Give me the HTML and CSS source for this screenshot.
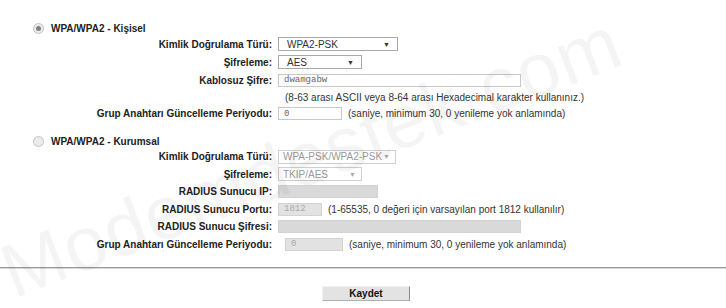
FILE: index.html
```html
<!DOCTYPE html>
<html lang="tr">
<head>
    <meta charset="UTF-8">
    <meta name="viewport" content="width=device-width, initial-scale=1.0">
    <title>Kablosuz Güvenlik</title>
    <link rel="stylesheet" href="styles.css">
</head>
<body>
    <!-- WPA/WPA2 Personal -->
    <div class="section personal">
        <div class="radio-row">
            <span class="radio checked"></span>
            <span class="radio-label">WPA/WPA2 - Kişisel</span>
        </div>
        <div class="row">
            <label class="label">Kimlik Doğrulama Türü:</label>
            <div class="select select-wide"><span>WPA2-PSK</span><span class="arrow">&#9660;</span></div>
        </div>
        <div class="row">
            <label class="label">Şifreleme:</label>
            <div class="select select-short"><span>AES</span><span class="arrow">&#9660;</span></div>
        </div>
        <div class="row">
            <label class="label">Kablosuz Şifre:</label>
            <input type="text" class="field field-long" value="dwamgabw">
        </div>
        <div class="row hint-row">
            <span class="label"></span>
            <span class="hint">(8-63 arası ASCII veya 8-64 arası Hexadecimal karakter kullanınız.)</span>
        </div>
        <div class="row group-row">
            <label class="label">Grup Anahtarı Güncelleme Periyodu:</label>
            <input type="text" class="field field-period" value="0">
            <span class="note">(saniye, minimum 30, 0 yenileme yok anlamında)</span>
        </div>
    </div>

    <!-- WPA/WPA2 Enterprise -->
    <div class="section enterprise">
        <div class="radio-row">
            <span class="radio"></span>
            <span class="radio-label">WPA/WPA2 - Kurumsal</span>
        </div>
        <div class="row">
            <label class="label">Kimlik Doğrulama Türü:</label>
            <div class="select select-wide disabled"><span>WPA-PSK/WPA2-PSK</span><span class="arrow">&#9660;</span></div>
        </div>
        <div class="row">
            <label class="label">Şifreleme:</label>
            <div class="select select-short disabled"><span>TKIP/AES</span><span class="arrow">&#9660;</span></div>
        </div>
        <div class="row">
            <label class="label">RADIUS Sunucu IP:</label>
            <input type="text" class="field field-ip" disabled>
        </div>
        <div class="row">
            <label class="label">RADIUS Sunucu Portu:</label>
            <input type="text" class="field field-port" value="1812" disabled>
            <span class="note">(1-65535, 0 değeri için varsayılan port 1812 kullanılır)</span>
        </div>
        <div class="row">
            <label class="label">RADIUS Sunucu Şifresi:</label>
            <input type="text" class="field field-long" disabled>
        </div>
        <div class="row">
            <label class="label">Grup Anahtarı Güncelleme Periyodu:</label>
            <input type="text" class="field field-period shifted" value="0" disabled>
            <span class="note">(saniye, minimum 30, 0 yenileme yok anlamında)</span>
        </div>
    </div>

    <hr class="divider">

    <div class="actions">
        <button class="save-btn">Kaydet</button>
    </div>

    <!-- watermark from the screenshot -->
    <div class="watermark">Modemdestek.com</div>
</body>
</html>
```

FILE: styles.css
```css
/* Global Styles */
body {
    margin: 0;
    padding: 0;
    height: 308px;
    overflow: hidden;
    position: relative;
    background-color: #fff;
    color: #333;
    font-family: "Liberation Sans", Arial, sans-serif;
    font-size: 10px;
}

/* Sections */
.personal {
    padding-top: 21px;
}

.enterprise {
    margin-top: 13px;
}

.radio-row {
    display: flex;
    align-items: center;
    height: 14px;
    padding-left: 33px;
}

.radio {
    width: 9px;
    height: 9px;
    border: 1px solid #c4c4c4;
    border-radius: 50%;
    background-color: #ececec;
    margin-right: 7px;
    display: flex;
    align-items: center;
    justify-content: center;
}

.radio.checked::after {
    content: "";
    width: 5px;
    height: 5px;
    border-radius: 50%;
    background-color: #808080;
}

.radio-label {
    font-weight: bold;
    color: #222;
}

/* Rows */
.row {
    display: flex;
    align-items: center;
    height: 18px;
}

.enterprise .row {
    height: 17.5px;
}

.hint-row {
    height: 17px;
}

.group-row {
    height: 15px;
}

.label {
    width: 272px;
    flex-shrink: 0;
    text-align: right;
    font-weight: bold;
    color: #222;
}

.hint {
    margin-left: 13px;
}

.note {
    margin-left: 6px;
}

/* Select boxes */
.select {
    height: 12px;
    margin-left: 6px;
    border: 1px solid #a9a9a9;
    background-color: #fff;
    display: flex;
    align-items: center;
    justify-content: space-between;
    padding: 0 7px 0 8px;
    color: #333;
    white-space: nowrap;
}

.select-wide {
    width: 103px;
}

.select-short {
    width: 67px;
}

.select .arrow {
    font-size: 7px;
    color: #333;
}

.select.disabled {
    border-color: #cfcfcf;
    color: #9a9a9a;
    padding: 0 5px 0 4px;
    width: 107px;
}

.select-short.disabled {
    width: 73px;
}

.select.disabled .arrow {
    color: #aaa;
}

/* Text fields */
.field {
    height: 13px;
    margin: 0 0 0 6px;
    padding: 0 0 0 5px;
    border: 1px solid #c8c8c8;
    background-color: #fff;
    box-sizing: border-box;
    font-family: "Liberation Mono", "Courier New", monospace;
    font-size: 9px;
    color: #666;
    outline: none;
}

.field-long {
    width: 243px;
}

.field-period {
    width: 64px;
}

.field-ip {
    width: 100px;
}

.field-port {
    width: 44px;
}

.field:disabled {
    background-color: #d9d9d9;
    border-color: #d2d2d2;
    color: #aaa;
}

.field-port:disabled,
.field-period:disabled {
    background-color: #e2e2e2;
}

.field.shifted {
    margin-left: 13px;
    width: 58px;
}

/* Divider and button */
.divider {
    margin: 14px 0 0 0;
    height: 0;
    border: 0;
    border-top: 1px solid #9a9a9a;
    border-bottom: 1px solid #d8d8d8;
}

.actions {
    display: flex;
    justify-content: center;
    margin-top: 17px;
}

.save-btn {
    width: 88px;
    height: 15px;
    padding: 0;
    margin-left: 6px;
    background-color: #e3e3e3;
    border: 1px solid;
    border-color: #f2f2f2 #8a8a8a #b0b0b0 #f2f2f2;
    font-family: "Liberation Sans", Arial, sans-serif;
    font-size: 10px;
    font-weight: bold;
    color: #111;
    cursor: pointer;
}

/* Watermark */
.watermark {
    position: absolute;
    left: 18px;
    top: 234px;
    font-size: 76px;
    line-height: 76px;
    letter-spacing: 1px;
    white-space: nowrap;
    color: rgba(0, 0, 0, 0.045);
    transform: rotate(-21deg);
    transform-origin: 0 100%;
    pointer-events: none;
}
```
